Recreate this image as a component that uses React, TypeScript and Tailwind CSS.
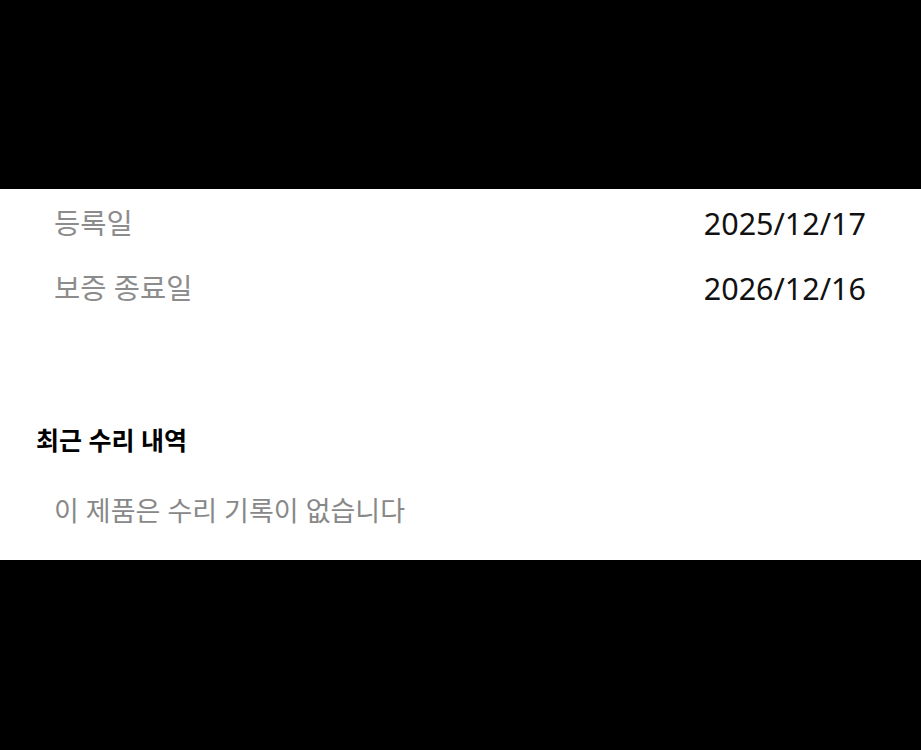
const rows = [
  { label: "등록일", value: "2025/12/17" },
  { label: "보증 종료일", value: "2026/12/16" },
];

export default function App() {
  return (
    <div className="flex min-h-[750px] flex-col bg-black font-['Noto_Sans','Noto_Sans_CJK_KR',sans-serif]">
      <div className="h-[189px] shrink-0" />
      <div className="flex flex-col bg-white pt-[1px] pb-[31px]">
        {rows.map((row) => (
          <div
            key={row.label}
            className="flex h-[65px] items-center justify-between pl-[54px] pr-[55px]"
          >
            <span className="text-[28.5px] leading-9 text-[#8c8c8c]">{row.label}</span>
            <span className="text-[30.5px] leading-9 text-[#111111]">{row.value}</span>
          </div>
        ))}
        <h2 className="mt-[102px] pl-[36px] text-[25px] font-bold leading-9 text-black">
          최근 수리 내역
        </h2>
        <p className="mt-[35px] pl-[54px] text-[27px] leading-9 text-[#888888]">
          이 제품은 수리 기록이 없습니다
        </p>
      </div>
      <div className="flex-1" />
    </div>
  );
}
